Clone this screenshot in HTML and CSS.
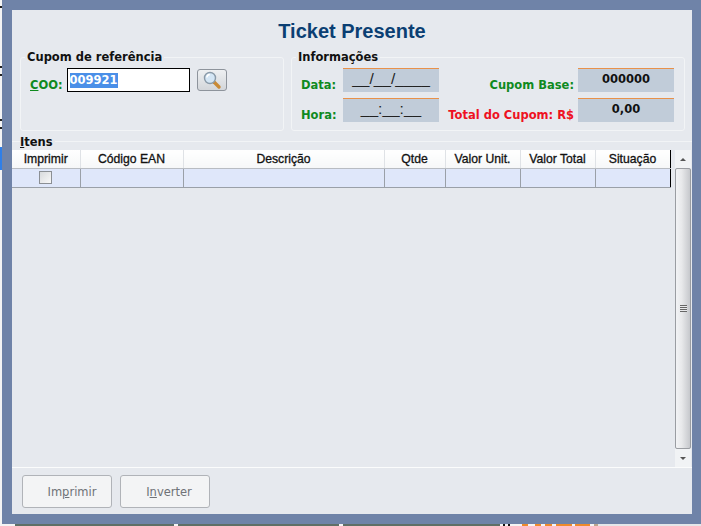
FILE: index.html
```html
<!DOCTYPE html>
<html lang="en">

<head>
    <meta charset="UTF-8">
    <title>Ticket Presente</title>
    <link rel="stylesheet" href="styles.css">
</head>

<body>

<!-- Bits of the window behind the dialog -->
<div class="behind-left"></div>
<div class="behind-bottom"></div>

<div class="frame">
    <div class="dialog">
        <h1 class="title">Ticket Presente</h1>

        <div class="top-row">
            <!-- Cupom -->
            <fieldset class="group cupom-group">
                <legend>Cupom de referência</legend>
                <div class="coo-row">
                    <label class="lbl-green" for="coo"><u>C</u>OO:</label>
                    <div class="coo-input" id="coo"><span class="selected">009921</span></div>
                    <button class="search-btn" aria-label="Buscar">
                        <svg width="20" height="20" viewBox="0 0 20 20">
                            <path d="M12 12l5 5" stroke="#c98a35" stroke-width="3.4" stroke-linecap="round"/>
                            <circle cx="8" cy="8" r="5.5" fill="#d4e6f5" stroke="#8a9aa8" stroke-width="1.4"/>
                            <path d="M4.8 7.5a3.4 3.4 0 0 1 3-3" fill="none" stroke="#fff" stroke-width="1.4"/>
                        </svg>
                    </button>
                </div>
            </fieldset>

            <!-- Informacoes -->
            <fieldset class="group info-group">
                <legend>Informações</legend>
                <div class="info-grid">
                    <span class="lbl-green">Data:</span>
                    <div class="value mask">__/__/____</div>
                    <span class="lbl-green right">Cupom Base:</span>
                    <div class="value">000000</div>
                    <span class="lbl-green">Hora:</span>
                    <div class="value mask">__:__:__</div>
                    <span class="lbl-red right">Total do Cupom: R$</span>
                    <div class="value">0,00</div>
                </div>
            </fieldset>
        </div>

        <!-- Itens -->
        <section class="items">
            <div class="items-title"><u>I</u>tens</div>
            <div class="items-body">
                <div class="table-wrap">
                    <table class="grid">
                        <thead>
                            <tr>
                                <th class="col-print">Imprimir</th>
                                <th class="col-ean">Código EAN</th>
                                <th class="col-desc">Descrição</th>
                                <th class="col-qty">Qtde</th>
                                <th class="col-unit">Valor Unit.</th>
                                <th class="col-total">Valor Total</th>
                                <th class="col-sit">Situação</th>
                            </tr>
                        </thead>
                        <tbody>
                            <tr>
                                <td><span class="check"></span></td>
                                <td></td>
                                <td></td>
                                <td></td>
                                <td></td>
                                <td></td>
                                <td></td>
                            </tr>
                        </tbody>
                    </table>
                </div>
                <div class="scrollbar">
                    <div class="arrow-up"></div>
                    <div class="thumb">
                        <span class="grip"></span>
                    </div>
                    <div class="arrow-down"></div>
                </div>
            </div>
        </section>

        <div class="buttons">
            <button class="btn btn-print" disabled>Im<u>p</u>rimir</button>
            <button class="btn btn-invert" disabled>I<u>n</u>verter</button>
        </div>
    </div>
</div>

</body>

</html>
```
FILE: styles.css
```css
* {
    margin: 0;
    padding: 0;
    box-sizing: border-box;
}

body {
    position: relative;
    width: 701px;
    height: 526px;
    overflow: hidden;
    background-color: #f4f4f4;
    font-family: 'Liberation Sans', Arial, sans-serif;
    font-size: 12px;
}

.behind-left {
    position: absolute;
    left: 0;
    top: 0;
    width: 2px;
    height: 200px;
    background: linear-gradient(#f4f4f4 6px, #222 6px 8px, #f4f4f4 8px 66px, #222 66px 68px, #f4f4f4 68px 74px, #222 74px 76px, #f4f4f4 76px 119px, #222 119px 121px, #f4f4f4 121px 127px, #222 127px 129px, #f4f4f4 129px 147px, #2f7fe8 147px 170px, #f4f4f4 170px);
}

.behind-bottom {
    position: absolute;
    left: 0;
    top: 524px;
    width: 701px;
    height: 2px;
    background: linear-gradient(90deg, #f4f4f4 15px, #5f6f66 15px 174px, #f4f4f4 174px 178px, #5f6f66 178px 339px, #f4f4f4 339px 343px, #5f6f66 343px 500px, #f4f4f4 500px 503px, #111 503px 505px, #f4f4f4 505px 508px, #111 508px 510px, #f4f4f4 510px 522px, #ee8a2c 522px 528px, #f4f4f4 528px 535px, #ee8a2c 535px 541px, #f4f4f4 541px 545px, #ee8a2c 545px 552px, #f4f4f4 552px 556px, #ee8a2c 556px 572px, #f4f4f4 572px 575px, #ee8a2c 575px 590px, #f4f4f4 590px 594px, #b9a48e 594px 598px, #e4e7ea 598px);
}

.frame {
    position: relative;
    margin-left: 2px;
    width: 699px;
    height: 524px;
    padding: 10px 9px 10px 10px;
    background-color: #6f83a8;
}

.dialog {
    height: 504px;
    background-color: #e6e9ee;
    display: flex;
    flex-direction: column;
}

.title {
    height: 42px;
    padding-top: 9px;
    text-align: center;
    font-size: 20px;
    line-height: 24px;
    font-weight: bold;
    color: #0b3f73;
}

.top-row {
    display: flex;
    gap: 7px;
    height: 80px;
    padding-left: 8px;
    padding-right: 7px;
}

.group {
    border: 1px solid #f2f4f6;
    border-radius: 3px;
    height: 80px;
    margin-top: -1px;
}

.group legend {
    margin-left: 4px;
    padding: 0 2px;
    font-family: 'DejaVu Sans', sans-serif;
    font-size: 11.5px;
    line-height: 13px;
    font-weight: bold;
    color: #111;
}

.cupom-group {
    width: 264px;
}

.info-group {
    width: 394px;
}

.lbl-green {
    padding-top: 9px;
    color: #0f8a1e;
    font-family: 'DejaVu Sans', sans-serif;
    font-size: 11.5px;
    font-weight: bold;
}

.lbl-red {
    padding-top: 9px;
    color: #ee1122;
    font-family: 'DejaVu Sans', sans-serif;
    font-size: 11.5px;
    font-weight: bold;
    white-space: nowrap;
}

.right {
    text-align: right;
}

.coo-row {
    display: flex;
    align-items: center;
    padding: 4px 0 0 9px;
    gap: 4px;
}

.coo-input {
    width: 123px;
    height: 24px;
    background-color: #fff;
    border: 1px solid #000;
    padding: 2px 2px;
    font-family: 'DejaVu Sans', sans-serif;
    font-size: 11.5px;
    font-weight: bold;
    line-height: 16px;
}

.selected {
    display: inline-block;
    background-color: #4a8fe8;
    color: #fff;
    height: 15px;
    margin-top: 2px;
    line-height: 14px;
}

.search-btn {
    width: 30px;
    height: 22px;
    margin-left: 3px;
    border: 1px solid #8e949c;
    border-radius: 3px;
    background: linear-gradient(#eef0f2, #d3d6da);
    display: flex;
    align-items: center;
    justify-content: center;
}

.info-grid {
    display: grid;
    grid-template-columns: 42px 96px 139px 96px;
    grid-template-rows: 24px 24px;
    row-gap: 6px;
    padding: 4px 0 0 9px;
    align-items: center;
}

.info-grid .right {
    padding-right: 4px;
}

.value {
    height: 24px;
    background-color: #c1ccd9;
    border-top: 1px solid #e8914a;
    text-align: center;
    font-family: 'DejaVu Sans', sans-serif;
    font-size: 11.5px;
    font-weight: bold;
    line-height: 20px;
    color: #111;
}

.value.mask {
    font-family: 'Liberation Sans', Arial, sans-serif;
    font-size: 15.5px;
    font-weight: normal;
    line-height: 19px;
    color: #222;
}

.items {
    margin-top: 9px;
    flex: 1;
    border-top: 1px solid #f2f4f6;
    border-bottom: 1px solid #fbfcfc;
    display: flex;
    flex-direction: column;
    position: relative;
    min-height: 0;
}

.items-title {
    position: absolute;
    left: 8px;
    top: -6px;
    padding-right: 2px;
    background-color: #e6e9ee;
    font-family: 'DejaVu Sans', sans-serif;
    font-size: 11.5px;
    font-weight: bold;
    line-height: 13px;
    color: #111;
}

.items-body {
    flex: 1;
    display: flex;
    padding-top: 8px;
    min-height: 0;
}

.table-wrap {
    width: 661px;
}

.grid {
    width: 658px;
    table-layout: fixed;
    border-collapse: collapse;
    border-right: 1px solid #000;
}

.grid th {
    height: 18px;
    background: linear-gradient(#ffffff, #f6f7f8);
    border-right: 1px solid #dfe2e6;
    border-bottom: 1px solid #b8bcc2;
    font-size: 12.2px;
    font-weight: normal;
    color: #111;
    -webkit-text-stroke: 0.3px #111;
    text-align: center;
}

.grid td {
    height: 19px;
    background-color: #dfe7fa;
    border-right: 1px solid #9aa0a8;
    border-bottom: 1px solid #9aa0a8;
    text-align: center;
    vertical-align: middle;
}

.grid th:last-child,
.grid td:last-child {
    border-right: none;
}

.col-print { width: 68px; }
.col-ean { width: 103px; }
.col-desc { width: 201px; }
.col-qty { width: 61px; }
.col-unit { width: 75px; }
.col-total { width: 75px; }
.col-sit { width: 75px; }

.check {
    display: block;
    width: 13px;
    height: 13px;
    margin: 0 auto;
    border: 1px solid #8b8f94;
    background: linear-gradient(135deg, #d8dadd, #f8f8f8);
}

.scrollbar {
    width: 16px;
    margin-left: 2px;
    display: flex;
    flex-direction: column;
}

.arrow-up,
.arrow-down {
    height: 18px;
    display: flex;
    align-items: center;
    justify-content: center;
    background-color: #f1f3f5;
}

.arrow-up::before {
    content: "";
    border-left: 3px solid transparent;
    border-right: 3px solid transparent;
    border-bottom: 3px solid #555;
}

.arrow-down::before {
    content: "";
    border-left: 3px solid transparent;
    border-right: 3px solid transparent;
    border-top: 3px solid #555;
}

.thumb {
    flex: 1;
    border: 1px solid #9a9da2;
    border-radius: 2px;
    background: linear-gradient(90deg, #f2f3f5, #e8e9eb 40%, #c6c8cc);
    display: flex;
    align-items: center;
    justify-content: center;
}

.grip {
    display: block;
    width: 7px;
    height: 7px;
    background: repeating-linear-gradient(#666 0 1px, #e8e9eb 1px 2px);
}

.buttons {
    height: 46px;
    padding: 7px 0 0 10px;
    display: flex;
    gap: 8px;
    flex-shrink: 0;
}

.btn {
    width: 90px;
    height: 33px;
    border: 1px solid #b0b3b8;
    border-radius: 3px;
    background-color: #f3f4f5;
    color: #6f7277;
    font-family: 'DejaVu Sans', sans-serif;
    font-size: 11.5px;
}

.btn-print {
    padding-left: 10px;
}

.btn-invert {
    padding-left: 8px;
}
```
